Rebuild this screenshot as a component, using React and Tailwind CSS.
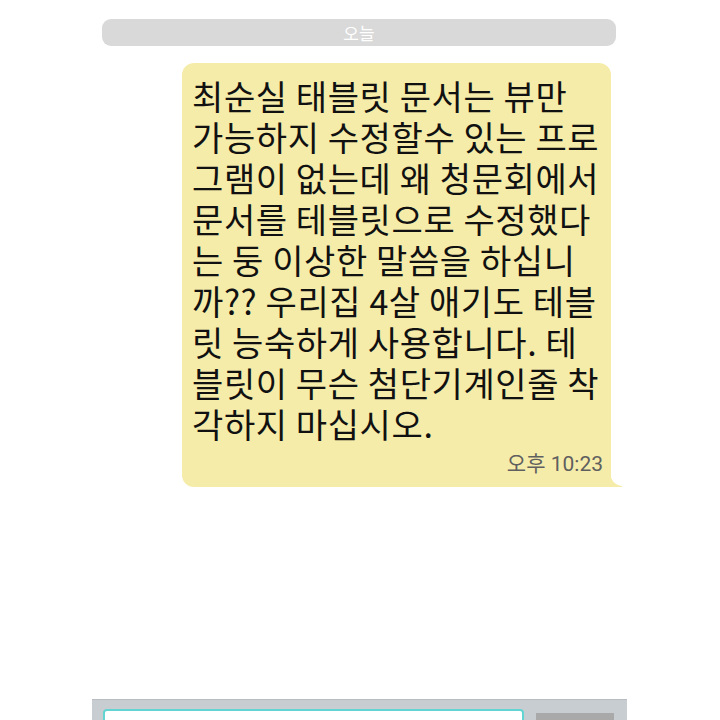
const lines = [
  "최순실 태블릿 문서는 뷰만",
  "가능하지 수정할수 있는 프로",
  "그램이 없는데 왜 청문회에서",
  "문서를 테블릿으로 수정했다",
  "는 둥 이상한 말씀을 하십니",
  "까?? 우리집 4살 애기도 테블",
  "릿 능숙하게 사용합니다. 테",
  "블릿이 무슨 첨단기계인줄 착",
  "각하지 마십시오.",
];

const App = () => {
  return (
    <div
      className="h-[720px] w-[720px] overflow-hidden bg-white flex flex-col"
      style={{ fontFamily: '"Noto Sans CJK KR", "Noto Sans", sans-serif' }}
    >
      {/* date divider */}
      <div className="pt-[19px] pl-[102px]">
        <div className="w-[514px] h-[27px] rounded-[9px] bg-[#d9d9d9] flex items-center justify-center text-white text-[17px] leading-none">
          오늘
        </div>
      </div>

      {/* message bubble */}
      <div className="pt-[17px] pl-[182px]">
        <div className="relative w-[429px] h-[424px] bg-[#f5eca9] rounded-[12px] rounded-br-none pl-[10px] pr-[8px] pt-[12px]">
          <div className="text-[34px] leading-[41px] text-[#111] font-normal tracking-[0.6px] whitespace-nowrap">
            {lines.map((l, i) => (
              <div key={i}>{l}</div>
            ))}
          </div>
          <div
            className="mt-[8px] text-right text-[21px] leading-[24px] text-[#5f5f5f]"
            style={{ fontFamily: 'Roboto, "Noto Sans CJK KR", sans-serif' }}
          >
            오후 10:23
          </div>
          <svg className="absolute left-[428px] bottom-0" width="13" height="14" viewBox="0 0 13 14">
            <path d="M0 0 C1 8 5 12 12 13 L12 14 L0 14 Z" fill="#f5eca9" />
          </svg>
        </div>
      </div>

      {/* input bar */}
      <div className="mt-auto pl-[92px]">
        <div className="w-[535px] h-[21px] bg-[#c8cdd1] border-t border-[#b8bcc0] flex items-start pt-[9px] pl-[11px]">
          <div className="w-[421px] h-[20px] bg-white border-2 border-[#62d4d2] rounded-t-[4px]" />
          <div className="ml-[12px] mt-[4px] w-[78px] h-[10px] bg-[#a9a9a9]" />
        </div>
      </div>
    </div>
  );
};

export default App;
